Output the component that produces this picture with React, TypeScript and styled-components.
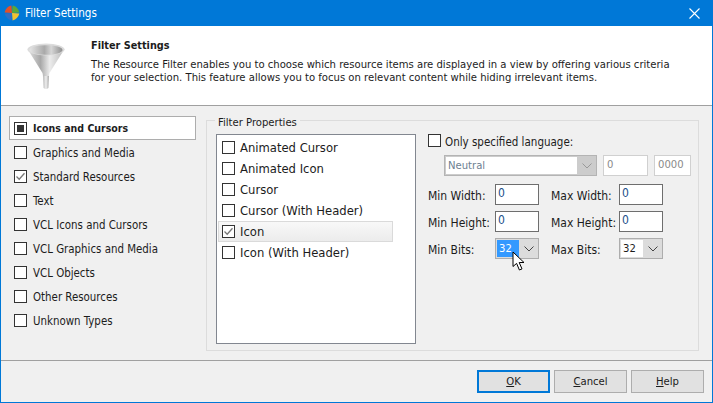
import styled, { createGlobalStyle } from "styled-components";

const categories = [
  { name: "Icons and Cursors", mark: "mixed", active: true },
  { name: "Graphics and Media" },
  { name: "Standard Resources", mark: "checked" },
  { name: "Text" },
  { name: "VCL Icons and Cursors" },
  { name: "VCL Graphics and Media" },
  { name: "VCL Objects" },
  { name: "Other Resources" },
  { name: "Unknown Types" },
];

const properties = [
  { name: "Animated Cursor" },
  { name: "Animated Icon" },
  { name: "Cursor" },
  { name: "Cursor (With Header)" },
  { name: "Icon", mark: "checked", active: true },
  { name: "Icon (With Header)" },
];

const App = () => {
  return (
    <>
      <GlobalStyle />
      <Window>
        <TitleBar>
          <AppIcon />
          <TitleText>Filter Settings</TitleText>
          <CloseIcon />
        </TitleBar>
        <Header>
          <FunnelIcon />
          <HeaderText>
            <HeaderTitle>Filter Settings</HeaderTitle>
            <HeaderDesc>
              The Resource Filter enables you to choose which resource items are
              displayed in a view by offering various criteria
              <br />
              for your selection. This feature allows you to focus on relevant
              content while hiding irrelevant items.
            </HeaderDesc>
          </HeaderText>
        </Header>
        <Body>
          <CategoryList>
            {categories.map((c) => (
              <CategoryRow key={c.name} $active={c.active}>
                <CheckBox mark={c.mark} />
                <CategoryName $active={c.active}>{c.name}</CategoryName>
              </CategoryRow>
            ))}
          </CategoryList>
          <Group>
            <GroupTitle>Filter Properties</GroupTitle>
            <PropertyList>
              {properties.map((p) => (
                <PropertyRow key={p.name} $active={p.active}>
                  <CheckBox mark={p.mark} />
                  <span>{p.name}</span>
                </PropertyRow>
              ))}
            </PropertyList>
            <Options>
              <LanguageRow>
                <CheckBox />
                <span>Only specified language:</span>
              </LanguageRow>
              <LanguageFields>
                <Combo $width={153} $disabled>
                  <ComboValue $disabled>Neutral</ComboValue>
                  <ComboArrow $disabled>
                    <Chevron />
                  </ComboArrow>
                </Combo>
                <DisabledEdit $width={45}>0</DisabledEdit>
                <DisabledEdit $width={37}>0000</DisabledEdit>
              </LanguageFields>
              <SizeGrid>
                <FieldLabel>Min Width:</FieldLabel>
                <Edit>0</Edit>
                <FieldLabel $second>Max Width:</FieldLabel>
                <Edit>0</Edit>
                <FieldLabel>Min Height:</FieldLabel>
                <Edit>0</Edit>
                <FieldLabel $second>Max Height:</FieldLabel>
                <Edit>0</Edit>
                <FieldLabel>Min Bits:</FieldLabel>
                <CursorAnchor>
                  <Combo $width={44}>
                    <ComboValue $selected>32</ComboValue>
                    <ComboArrow>
                      <Chevron />
                    </ComboArrow>
                  </Combo>
                  <Pointer />
                </CursorAnchor>
                <FieldLabel $second>Max Bits:</FieldLabel>
                <Combo $width={44}>
                  <ComboValue>32</ComboValue>
                  <ComboArrow>
                    <Chevron />
                  </ComboArrow>
                </Combo>
              </SizeGrid>
            </Options>
          </Group>
        </Body>
        <Footer>
          <Button $primary>
            <u>O</u>K
          </Button>
          <Button>
            <u>C</u>ancel
          </Button>
          <Button>
            <u>H</u>elp
          </Button>
        </Footer>
      </Window>
    </>
  );
};

export default App;

const CheckBox = ({ mark }: { mark?: string }) => (
  <Box>
    {mark === "mixed" && <MixedFill />}
    {mark === "checked" && (
      <svg width="11" height="11" viewBox="0 0 11 11">
        <path d="M1.5 5.5 L4.2 8.2 L9.5 2.2" fill="none" stroke="#777" strokeWidth="1.3" />
      </svg>
    )}
  </Box>
);

const Chevron = () => (
  <svg width="10" height="6" viewBox="0 0 10 6">
    <path d="M0.5 0.5 L5 5 L9.5 0.5" fill="none" stroke="currentColor" strokeWidth="1" />
  </svg>
);

const CloseIcon = () => (
  <CloseSvg width="11" height="11" viewBox="0 0 11 11">
    <path d="M0.5 0.5 L10.5 10.5 M10.5 0.5 L0.5 10.5" stroke="#fff" strokeWidth="1.1" />
  </CloseSvg>
);

const AppIcon = () => (
  <svg width="16" height="16" viewBox="0 0 16 16">
    <path d="M8 8 L7.4 0.6 Q2.2 1.8 0.6 7.4 Z" fill="#e2502a" />
    <path d="M8 8 L8.6 0.6 Q13.8 1.8 15.4 7.4 Z" fill="#5aa83a" />
    <path d="M8 8 L0.6 8.6 Q2.2 14.2 7.4 15.4 Z" fill="#2f6fc4" />
    <path d="M8 8 L15.4 8.6 Q13.8 14.2 8.6 15.4 Z" fill="#f2c230" />
  </svg>
);

const FunnelIcon = () => (
  <FunnelSvg width="38" height="48" viewBox="0 0 38 48">
    <defs>
      <linearGradient id="funnelBody" x1="0" x2="1" y1="0" y2="0">
        <stop offset="0" stopColor="#e2e2e2" />
        <stop offset="0.35" stopColor="#a8a8a8" />
        <stop offset="0.6" stopColor="#ececec" />
        <stop offset="1" stopColor="#b8b8b8" />
      </linearGradient>
      <linearGradient id="funnelInner" x1="0" x2="1" y1="0" y2="0">
        <stop offset="0" stopColor="#e6e6e6" />
        <stop offset="0.45" stopColor="#a9a9a9" />
        <stop offset="0.66" stopColor="#d6d6d6" />
        <stop offset="1" stopColor="#8f8f8f" />
      </linearGradient>
      <linearGradient id="funnelStem" x1="0" x2="1" y1="0" y2="0">
        <stop offset="0" stopColor="#b8b8b8" />
        <stop offset="0.5" stopColor="#efefef" />
        <stop offset="1" stopColor="#a8a8a8" />
      </linearGradient>
    </defs>
    <path d="M0.5 6 L15.5 30 Q16 32 16 34 L22 34 Q22 32 22.5 30 L37.5 6 Z" fill="url(#funnelBody)" />
    <path d="M16 33 L22 33 L21.4 45 Q19 47 16.6 45 Z" fill="url(#funnelStem)" />
    <ellipse cx="19" cy="6.5" rx="18.5" ry="6" fill="#dcdcdc" />
    <ellipse cx="19" cy="7" rx="16.5" ry="4.8" fill="url(#funnelInner)" />
  </FunnelSvg>
);

const Pointer = () => (
  <PointerSvg width="14" height="21" viewBox="0 0 14 21">
    <path
      d="M1 1 L1 15.5 L4.6 12.4 L7.4 19 L10 17.9 L7.2 11.5 L12 11.5 Z"
      fill="#fff"
      stroke="#000"
      strokeWidth="1"
    />
  </PointerSvg>
);

const GlobalStyle = createGlobalStyle`
  html, body {
    margin: 0;
    padding: 0;
  }
  body {
    font-family: "DejaVu Sans Condensed", "DejaVu Sans", sans-serif;
    font-stretch: condensed;
    font-size: 11.2px;
    color: #1c1c1c;
  }
`;

const Window = styled.div`
  width: 713px;
  height: 403px;
  box-sizing: border-box;
  display: flex;
  flex-direction: column;
  border: 1px solid #0078d7;
  border-top: none;
  background: #f0f0f0;
`;

const TitleBar = styled.div`
  height: 26px;
  flex: none;
  display: flex;
  align-items: center;
  gap: 5px;
  padding: 0 9px 0 4px;
  margin: 0 -1px;
  background: #0078d7;
  color: #fff;
`;

const TitleText = styled.div`
  flex: 1;
  font-size: 11.6px;
`;

const CloseSvg = styled.svg`
  margin-right: 4px;
`;

const Header = styled.div`
  height: 80px;
  flex: none;
  box-sizing: border-box;
  display: flex;
  padding: 13px 0 0 26px;
  background: #fff;
  border-bottom: 1px solid #a0a0a0;
`;

const FunnelSvg = styled.svg`
  flex: none;
  margin-top: 4px;
`;

const HeaderText = styled.div`
  margin-left: 26px;
`;

const HeaderTitle = styled.div`
  font-weight: 700;
  font-size: 10.8px;
  height: 19px;
  line-height: 14px;
`;

const HeaderDesc = styled.div`
  line-height: 13px;
  white-space: nowrap;
`;

const Body = styled.div`
  flex: 1;
  display: flex;
  gap: 10px;
  padding: 10px 13px 9px 8px;
`;

const CategoryList = styled.div`
  width: 187px;
  flex: none;
  display: flex;
  flex-direction: column;
`;

const CategoryRow = styled.div<{ $active?: boolean }>`
  height: 24px;
  box-sizing: border-box;
  display: flex;
  align-items: center;
  gap: 6px;
  padding-left: ${({ $active }) => ($active ? "4px" : "5px")};
  background: ${({ $active }) => ($active ? "#fff" : "transparent")};
  border: ${({ $active }) => ($active ? "1px solid #adadad" : "none")};
`;

const CategoryName = styled.span<{ $active?: boolean }>`
  font-weight: ${({ $active }) => ($active ? 700 : 400)};
  font-size: ${({ $active }) => ($active ? "10.5px" : "11.4px")};
  padding-top: ${({ $active }) => ($active ? "0" : "2px")};
`;

const Box = styled.span`
  width: 13px;
  height: 13px;
  box-sizing: border-box;
  flex: none;
  display: inline-flex;
  align-items: center;
  justify-content: center;
  background: #fff;
  border: 1px solid #333;
`;

const MixedFill = styled.span`
  width: 7px;
  height: 7px;
  background: #333;
`;

const Group = styled.div`
  position: relative;
  flex: 1;
  margin-top: 4px;
  box-sizing: border-box;
  display: flex;
  padding: 13px 0 6px 9px;
  border: 1px solid #dcdcdc;
`;

const GroupTitle = styled.div`
  position: absolute;
  left: 8px;
  top: -5px;
  padding: 0 3px;
  background: #f0f0f0;
  line-height: 13px;
`;

const PropertyList = styled.div`
  width: 200px;
  flex: none;
  box-sizing: border-box;
  padding: 2px 1px;
  background: #fff;
  border: 1px solid #828790;
`;

const PropertyRow = styled.div<{ $active?: boolean }>`
  width: 175px;
  height: 21px;
  box-sizing: border-box;
  display: flex;
  align-items: center;
  gap: 5px;
  font-size: 12.9px;
  padding-left: ${({ $active }) => ($active ? "3px" : "4px")};
  background: ${({ $active }) =>
    $active ? "linear-gradient(#f8f8f8, #ececec)" : "transparent"};
  border: ${({ $active }) => ($active ? "1px solid #dadada" : "none")};
`;

const Options = styled.div`
  flex: 1;
  padding-left: 12px;
`;

const LanguageRow = styled.div`
  display: flex;
  align-items: center;
  gap: 4px;
  height: 13px;
  font-size: 11.5px;
  & > span:last-child {
    padding-top: 2px;
  }
`;

const LanguageFields = styled.div`
  display: flex;
  gap: 6px;
  margin: 8px 0 8px 16px;
`;

const SizeGrid = styled.div`
  display: grid;
  grid-template-columns: 67px 44px 80px 44px;
  grid-auto-rows: 21px;
  row-gap: 6px;
  align-items: center;
`;

const FieldLabel = styled.span<{ $second?: boolean }>`
  font-size: 12px;
  padding-top: 2px;
  padding-left: ${({ $second }) => ($second ? "12px" : "0")};
`;

const Edit = styled.div`
  height: 21px;
  box-sizing: border-box;
  padding-left: 2px;
  line-height: 17px;
  font-size: 12px;
  color: #1a4f8a;
  background: #fff;
  border: 1px solid #6e6e6e;
`;

const DisabledEdit = styled.div<{ $width: number }>`
  width: ${({ $width }) => $width}px;
  height: 21px;
  box-sizing: border-box;
  padding-left: 3px;
  line-height: 17px;
  color: #8a8a8a;
  background: #fff;
  border: 1px solid #d0d0d0;
`;

const Combo = styled.div<{ $width: number; $disabled?: boolean }>`
  width: ${({ $width }) => $width}px;
  height: 21px;
  box-sizing: border-box;
  display: flex;
  padding: 1px 0 1px 1px;
  background: ${({ $disabled }) => ($disabled ? "#cccccc" : "#dcdcdc")};
  border: 1px solid ${({ $disabled }) => ($disabled ? "#b4b4b4" : "#adadad")};
`;

const ComboValue = styled.div<{ $disabled?: boolean; $selected?: boolean }>`
  flex: 1;
  padding-left: 2px;
  line-height: 17px;
  color: ${({ $disabled, $selected }) =>
    $selected ? "#fff" : $disabled ? "#6d7f92" : "#1c1c1c"};
  background: ${({ $selected }) => ($selected ? "#3399ff" : "#fff")};
`;

const ComboArrow = styled.div<{ $disabled?: boolean }>`
  width: 19px;
  flex: none;
  display: flex;
  align-items: center;
  justify-content: center;
  color: ${({ $disabled }) => ($disabled ? "#999" : "#444")};
`;

const CursorAnchor = styled.div`
  position: relative;
`;

const PointerSvg = styled.svg`
  position: absolute;
  left: 17px;
  top: 13px;
`;

const Footer = styled.div`
  height: 42px;
  flex: none;
  box-sizing: border-box;
  display: flex;
  justify-content: flex-end;
  gap: 4px;
  padding: 9px 8px 0 0;
  border-top: 1px solid #a0a0a0;
`;

const Button = styled.div<{ $primary?: boolean }>`
  width: 73px;
  height: 23px;
  box-sizing: border-box;
  display: flex;
  align-items: center;
  justify-content: center;
  background: #e1e1e1;
  border: ${({ $primary }) =>
    $primary ? "2px solid #0078d7" : "1px solid #adadad"};
`;
